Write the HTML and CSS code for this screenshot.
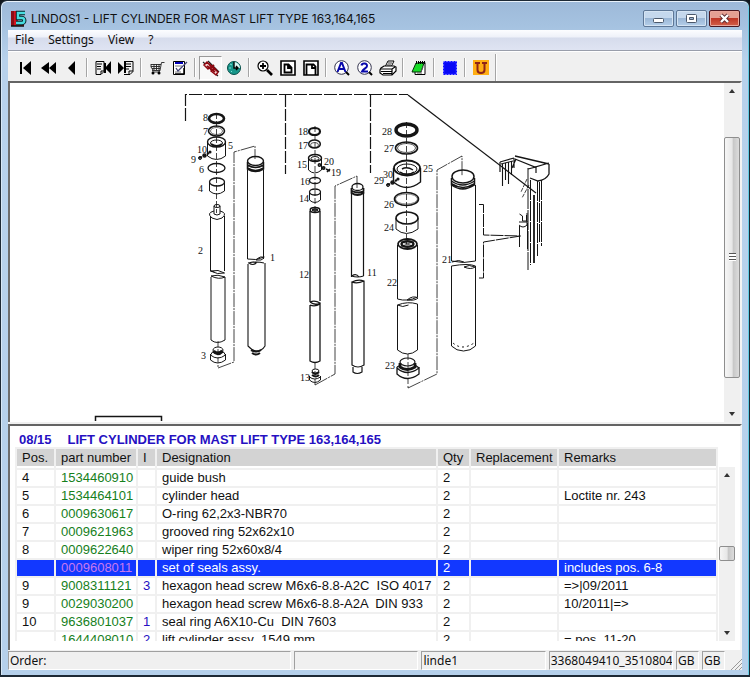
FILE: index.html
```html
<!DOCTYPE html>
<html lang="en">
<head>
<meta charset="utf-8">
<title>LINDOS1 - LIFT CYLINDER FOR MAST LIFT TYPE 163,164,165</title>
<link rel="stylesheet" href="styles.css">
</head>
<body>
<div class="window">
  <header class="titlebar">
    <svg class="app-icon" width="17" height="17" viewBox="0 0 17 17" aria-hidden="true">
      <path d="M1 1h7v12h6v3H1z" fill="#d3121f"/><path d="M1 1h3v15H1z" fill="#8a0d16"/><path d="M1 16h13" stroke="#111" stroke-width="1.5"/>
      <path d="M15 3H8v5h4c3 0 3 5 0 5H6" fill="none" stroke="#08252a" stroke-width="4.4"/>
      <path d="M15 3H8v5h4c3 0 3 5 0 5H6" fill="none" stroke="#48dce0" stroke-width="2.4"/>
    </svg>
    <h1>LINDOS1 - LIFT CYLINDER FOR MAST LIFT TYPE 163,164,165</h1>
    <div class="controls">
      <button class="control" aria-label="Minimize"><svg width="13" height="11" viewBox="0 0 13 11"><rect x="1.500" y="5.500" width="10" height="4" rx="1" fill="#fff" stroke="#4b586b"/></svg></button>
      <button class="control" aria-label="Restore"><svg width="13" height="11" viewBox="0 0 13 11"><rect x="1.500" y="1.500" width="10" height="8" rx="1" fill="#fff" stroke="#4b586b"/><path d="M4.500 4.500h4v2h-4z" fill="#9db4d0" stroke="#4b586b"/></svg></button>
      <button class="control close" aria-label="Close"><svg width="13" height="11" viewBox="0 0 13 11"><path d="M3 2l7 7M10 2L3 9" stroke="#5d2b30" stroke-width="4.200"/><path d="M3 2l7 7M10 2L3 9" stroke="#fff" stroke-width="2.400"/></svg></button>
    </div>
  </header>
  <nav class="menu">
    <button>File</button><button>Settings</button><button>View</button><button>?</button>
  </nav>
  <div class="toolbar" role="toolbar" aria-label="Catalogue tools">
    <button aria-label="First page"><svg width="18" height="18" viewBox="0 0 18 18"><path d="M3 3h2v12H3zM14 2v14L6 9z"/></svg></button>
    <button aria-label="Fast back"><svg width="18" height="18" viewBox="0 0 18 18"><path d="M9 3v12L1 9zM16 3v12L9 9z"/></svg></button>
    <button aria-label="Back"><svg width="18" height="18" viewBox="0 0 18 18"><path d="M12 2v14L5 9z"/></svg></button>
    <i class="sep"></i>
    <button aria-label="Previous list"><svg width="18" height="18" viewBox="0 0 18 18"><path d="M2 2.500h8v10l-3 3H2zM7 15v-3h3M3 5h5M3 7.500h4M3 10h4" fill="none" stroke="#000"/><path d="M10 4h2v10h-2zM17 2v13l-6-6z"/></svg></button>
    <button aria-label="Next list"><svg width="18" height="18" viewBox="0 0 18 18"><path d="M7 2.500h9v10l-3 3H7M12 15v-3h4M9 5h5M9 7.500h5M8 10h4" fill="none" stroke="#000"/><path d="M1 3v12l6-6zM7 3h2v11H7z"/></svg></button>
    <i class="sep"></i>
    <button aria-label="Order basket"><svg width="18" height="18" viewBox="0 0 18 18"><path d="M16.500 3.500h-3l-1.500 8H4M3 5.500h10M3 7.500h9M4 9.500h8M3 5v3l2 3M6 5v6M8.500 5v6M11 5v6M12 11l-1 2H4" fill="none" stroke="#222" stroke-width=".9"/><circle cx="5" cy="14" r="1.500"/><circle cx="11" cy="14" r="1.500"/></svg></button>
    <button aria-label="Order form"><svg width="18" height="18" viewBox="0 0 18 18"><path d="M2.500 2.500h11v13h-11z" fill="#fff" stroke="#000"/><path d="M4 4h8" stroke="#00b" stroke-width="2"/><path d="M4 7h7M4 13h6" stroke="#777"/><path d="M5 9l2 3 9-9" fill="none" stroke="#447" stroke-width="1.300"/><path d="M13 9v6M4 15h9" stroke="#000" stroke-width="1.500"/></svg></button>
    <i class="sep"></i>
    <button class="pressed" aria-label="Link picture" aria-pressed="true"><svg width="18" height="18" viewBox="0 0 18 18"><path d="M1 3l15 14M6 2l11 11" stroke="#222" stroke-width="1.200"/><path d="M2 6l3-3 4 4-3 3zM9 12l3-3 4 4-2 3z" fill="#f3d0d0" stroke="#8e0710" stroke-width="1.500"/><path d="M5 7l8 6M7 5l7 6M8 10l4-4" stroke="#8e0710" stroke-width="1.800"/></svg></button>
    <button aria-label="History"><svg width="18" height="18" viewBox="0 0 18 18"><circle cx="9" cy="9" r="6.500" fill="#17968a" stroke="#064d48"/><path d="M9 3a6 6 0 0 1 6 6H9z" fill="#d9f6f2"/><path d="M9 3v6h4M11 7l2 2-2 2" fill="none" stroke="#000" stroke-width="1.400"/><path d="M5 5l2 1M4 9h2M6 13l1-1" stroke="#7ee0d6"/></svg></button>
    <i class="sep"></i>
    <button aria-label="Zoom in"><svg width="18" height="18" viewBox="0 0 18 18"><circle cx="7" cy="7" r="5" fill="#fff" stroke="#000" stroke-width="1.200"/><path d="M4 7h6M7 4v6" stroke="#000" stroke-width="1.800"/><path d="M11 11l5 5" stroke="#000" stroke-width="2.600"/></svg></button>
    <button aria-label="Whole page"><svg width="18" height="18" viewBox="0 0 18 18"><path d="M2 2h14v14H2z" fill="#fff" stroke="#000" stroke-width="1.600"/><path d="M5.500 5.500h4l3 3v5h-7zM9 5v4h4" fill="none" stroke="#000" stroke-width="1.800"/></svg></button>
    <button aria-label="Page width"><svg width="18" height="18" viewBox="0 0 18 18"><path d="M2 2h14v14H2z" fill="#fff" stroke="#000" stroke-width="1.600"/><path d="M4.500 16V5.500h7l2 2V16M10 5v4h4" fill="none" stroke="#000" stroke-width="1.800"/></svg></button>
    <i class="sep"></i>
    <button aria-label="Search text"><svg width="18" height="18" viewBox="0 0 18 18"><circle cx="8.500" cy="8.500" r="6.800" fill="#fff" stroke="#33334d"/><path d="M13 13l3 3" stroke="#000" stroke-width="2"/><path d="M4.500 13L8 4h1l3.500 9M6 10h5" fill="none" stroke="#0808ab" stroke-width="2"/></svg></button>
    <button aria-label="Search number"><svg width="18" height="18" viewBox="0 0 18 18"><circle cx="8.500" cy="8.500" r="6.800" fill="#fff" stroke="#33334d"/><path d="M13 13l3 3" stroke="#000" stroke-width="2"/><path d="M5.500 6.500C6 3.500 11.500 4 11 7c0 2-4 3-5 5.500h6" fill="none" stroke="#0808ab" stroke-width="2"/></svg></button>
    <button aria-label="Print"><svg width="18" height="18" viewBox="0 0 18 18"><path d="M6 8l3-6h6l-3 6z" fill="#fff" stroke="#000"/><path d="M8 6h4M9 4h4" stroke="#000" stroke-width=".8"/><path d="M2 9l3-2h10l2 1v4l-4 4H4l-3-2v-3z" fill="#fff" stroke="#000" stroke-width="1.200"/><path d="M2 10h11l3-2M2 12.500h11M4 14.500h9M13 10v6" fill="none" stroke="#000" stroke-width="1.200"/></svg></button>
    <i class="sep"></i>
    <button aria-label="Notes"><svg width="18" height="18" viewBox="0 0 18 18"><path d="M8 3.500h7v12H5v-3" fill="#fff" stroke="#000"/><path d="M6 4h8l-3 9H2z" fill="#18dc27" stroke="#062d0a"/><path d="M6 3.500h9" stroke="#000" stroke-width="3" stroke-dasharray="1 1"/><path d="M11 13l2-5M7 14h5" stroke="#555" fill="none"/></svg></button>
    <i class="sep"></i>
    <button aria-label="Full screen"><svg width="18" height="18" viewBox="0 0 18 18"><path d="M3 3h12v12H3z" fill="#0808f5" stroke="#1010ff" stroke-width="2"/><path d="M2.500 2.500h13v13h-13z" fill="none" stroke="#c6c6ff" stroke-dasharray="1 2"/></svg></button>
    <i class="sep"></i>
    <button aria-label="Update"><svg width="18" height="18" viewBox="0 0 18 18"><path d="M1 1h16v15H1z" fill="#ffae13"/><path d="M3 4h5M10 4h5M5.500 4v7q0 3 3.500 3t3.500-3V4" fill="none" stroke="#8e2418" stroke-width="2"/></svg></button>
    <i class="sep"></i>
  </div>

  <main>
    <section class="pane picture" aria-label="Exploded drawing">
      <svg class="drawing" width="716" height="338" viewBox="10 83 716 338" fill="none" stroke="#151515">
        <defs>
          <g id="screw"><path d="M0 0l3-1M4-2l3-1M8-4l2-1" stroke-width="2"/><circle cx="1" cy="0" r="1.500"/><circle cx="5.500" cy="-2.500" r="1.500" stroke-width="1.500"/><circle cx="11" cy="-6" r=".8" stroke-width="1.500"/></g>
        </defs>
        <g stroke-width="1.200">
          <path d="M185.500 121V94.500H408" stroke-dasharray="13 2"/>
          <path d="M285.500 95v79M370.500 95v78" stroke-dasharray="12 2"/>
          <path d="M408 95L536 193"/><path d="M95.500 421v-4.500h66v4.500" stroke-width="1.500"/>
        </g>
        <g stroke-width=".8">
          <path d="M218 368l16-6V152l21-6v13M315 385l20-11V186l22-10v12M408 388l29-14V170l25-14v20" stroke-dasharray="14 1 2 1"/>
          <path d="M216.500 113v100M315 126v88M406.500 122v122M218 341v26M315 363v22M408 354v34" stroke-dasharray="6 2"/>
        </g>
        <g>
          <ellipse cx="216.500" cy="118.500" rx="7.500" ry="4.500" stroke-width="2.600"/>
          <ellipse cx="216.500" cy="131" rx="8" ry="5" stroke-width="1.600"/><ellipse cx="216.500" cy="131" rx="6" ry="3.500" stroke-width=".6"/>
          <path d="M207.500 142v14q9 7 18 0v-14"/><ellipse cx="216.500" cy="142" rx="9" ry="5" stroke-width="1.400"/><ellipse cx="216.500" cy="143" rx="6" ry="3"/><path d="M211 144q6 4 11 0" stroke-width="2"/>
          <ellipse cx="216.500" cy="168" rx="8.500" ry="4.500" stroke-width="1.300"/>
          <path d="M209.500 182v9q7 6 15 0v-9"/><ellipse cx="217" cy="182" rx="7.500" ry="4" stroke-width="1.300"/>
          <ellipse cx="217" cy="206" rx="3" ry="1.500"/><path d="M214 206v8q3 2 6 0v-8M214 211q-8 2-2 7 5 3 10 0 6-5-2-7"/>
          <path d="M210.500 216v55M224.500 216v55M210.500 271q8-2 14 2-7 2-14-2l4 1M211 277v63q6 5 14 0v-63M211 276q7-2 14 1-6 3-14-1"/>
          <path d="M210.500 354v6q7 6 15 0v-6M210.500 355q7 6 15 0l-2-3h-11z"/><ellipse cx="218" cy="350" rx="5" ry="3"/><path d="M213.500 351q4 5 9 0" stroke-width="3.500"/>
          <use href="#screw" x="199" y="158"/>
          <ellipse cx="255.500" cy="161" rx="8" ry="4.500" stroke-width="1.400"/><path d="M247.500 162v7q8 5 16 0v-7M247.500 165q8 5 16 0M247.500 168q8 5 16 0" stroke-width="1.500"/>
          <path d="M247.500 170v89M263.500 170v89M247.500 259q8 2 17-2M256 260q5-5 8-2-2 3-8 2"/>
          <path d="M248 264v82q5 5 8 5 6 0 9-5v-83M248 263q8-2 16 0M249 263q5-2 7 0-3 3-7 0" stroke-width="1.100"/><path d="M251 350q6 3 10 0M252 353q4 3 8 0" stroke-width="2"/>
        </g>
        <g>
          <ellipse cx="314.500" cy="131.500" rx="5.500" ry="3.500" stroke-width="2.200"/><ellipse cx="314.500" cy="144" rx="5.800" ry="4" stroke-width="1.500"/><ellipse cx="314.500" cy="145" rx="4" ry="2.500" stroke-width=".7"/>
          <path d="M308.500 158v12q6 6 13 0v-12"/><ellipse cx="315" cy="158" rx="6.500" ry="3.500" stroke-width="1.500"/><ellipse cx="315" cy="158.500" rx="4" ry="2"/>
          <circle cx="319.500" cy="165" r="1.200" stroke-width="1.500"/><circle cx="323.500" cy="168" r="1.200" stroke-width="1.800"/><path d="M326 169l4 2M327 172l3-3" stroke-width="1.600"/>
          <ellipse cx="315" cy="180.500" rx="5.500" ry="3" stroke-width="1.300"/><path d="M309.500 192v8q5 5 11 0v-8"/><ellipse cx="315" cy="192" rx="5.500" ry="3" stroke-width="1.300"/>
          <ellipse cx="315" cy="210" rx="4.800" ry="2.500" stroke-width="1.500"/><ellipse cx="315" cy="210" rx="2.500" ry="1" stroke-width="1.300"/>
          <path d="M310 211v91M320 211v90M310 302q5-2 10 1-5 3-10-1M310 305v56q5 3 10 0v-57q-5 3-10 1" stroke-width="1.300"/>
          <ellipse cx="315.500" cy="371" rx="3.500" ry="2"/><path d="M312 372q3 4 7 0M312 375q4 3 7 0" stroke-width="2"/><path d="M309.500 376v4q5 5 11 0v-4M309.500 377q5 4 11 0"/>
          <ellipse cx="357.500" cy="187" rx="5.500" ry="3.500" stroke-width="1.300"/><path d="M351.500 188v5q6 4 12 0v-5M352 191q6 3 12 0" stroke-width="1.800"/>
          <path d="M351.500 193v84M363.500 193v83M351.500 276q6 2 12 0M352 276q4-3 7 1M352 282v83q6 4 12 0v-84q-6-2-12 1 5 2 12-1M353 367v5q4 3 9 0v-5" stroke-width="1.200"/>
        </g>
        <g>
          <ellipse cx="406.500" cy="130" rx="10.500" ry="6" stroke-width="3.400"/><ellipse cx="406.500" cy="148" rx="11" ry="6" stroke-width="1.600"/><ellipse cx="406.500" cy="148" rx="9" ry="4.500" stroke-width=".7"/>
          <path d="M393.500 168v14q13 11 27 0v-14" stroke-width="1.400"/><ellipse cx="407" cy="168" rx="13" ry="7.500" stroke-width="1.800"/><ellipse cx="407" cy="169" rx="10" ry="5"/><path d="M400 172q7 5 14 0M402 169q5-3 11 1" stroke-width="1.500"/>
          <use href="#screw" x="387" y="185"/>
          <ellipse cx="406.500" cy="199" rx="12" ry="6.500" stroke-width="1.600"/><ellipse cx="406.500" cy="199" rx="11" ry="5" stroke-width=".5"/>
          <path d="M396 218v11q10 9 22 0v-11"/><ellipse cx="407" cy="218" rx="11" ry="6" stroke-width="1.500"/>
          <ellipse cx="407.500" cy="244" rx="9.500" ry="5" stroke-width="1.800"/><ellipse cx="407.500" cy="244" rx="6" ry="2.800" stroke-width="2.400"/><path d="M400 241l15 6M415 241l-15 6" stroke-width=".7"/>
          <path d="M397.500 245v54q10 3 20-2v-52M407 300q6-5 11-2-3 3-11 2M397.500 305v45q10 8 20 0v-46q-10-3-20 1 5 3 11 0"/>
          <ellipse cx="407.500" cy="362" rx="7.500" ry="4" stroke-width="1.200"/><path d="M400 363v4q7 5 15 0v-4" stroke-width="2.800"/><path d="M397 367v7q10 9 22 0v-7M397 368q10 9 22 0l-4-3M397 367l4-2" stroke-width="1.300"/>
          <ellipse cx="463" cy="176.500" rx="11" ry="6.500" stroke-width="1.500"/><path d="M451.500 178v7q11 8 23 0v-7M451.500 181q11 8 23 0M452 184q11 7 22 0" stroke-width="1.500"/>
          <path d="M451.500 185v76q12 3 24 0v-76M452 262q7-3 12 0M451.500 266v80q5 5 12 5t12-5v-80q-7-3-24 0M464 267q5-3 11 0-4 3-11 0"/><path d="M453 343q9 8 21 0" stroke-dasharray="2 3"/>
          <path d="M479 204.500h4.500V235l37 1-37 6v36H479" stroke-dasharray="13 1"/>
        </g>
        <g>
          <path d="M515 156l34 8M515 159l20 8 14-4M549 164v10q-3 6-11 7l-8-3" stroke-width="1.300"/>
          <path d="M500 162l14-4M501 164l12-3M500 162v10M514 158v10M516 159l-4 9M528 169l8-2v6" stroke-width="1.200"/>
          <path d="M502.500 164v22M505.500 163v17M508.500 162v22M511.500 161v14" stroke-width="1.100"/>
          <path d="M528 168v102M530.500 180v85M537.500 181v75M541.500 180v66M539.500 182v60" stroke-dasharray="20 1"/>
          <path d="M534 195v68" stroke-width="1.800"/>
          <path d="M527 179l-6 13M529 185l-7 13" stroke-width=".8" stroke-dasharray="4 1"/>
          <path d="M519.500 226v21M527.500 223v26M519.500 214l3 2v5h4v-6M519 222h8M519 225q4 4 8 0v-4M527 213v9"/>
        </g>
        <g class="callouts" fill="#111" stroke="none">
          <text x="203" y="121">8</text><text x="203" y="135">7</text><text x="197" y="153">10</text><text x="191" y="163">9</text><text x="228" y="149">5</text><text x="199" y="173">6</text><text x="198" y="192">4</text><text x="198" y="254">2</text><text x="201" y="359">3</text><text x="270" y="261">1</text>
          <text x="298" y="135">18</text><text x="298" y="149">17</text><text x="297" y="168">15</text><text x="324" y="165">20</text><text x="331" y="176">19</text><text x="300" y="185">16</text><text x="299" y="202">14</text><text x="299" y="278">12</text><text x="300" y="381">13</text><text x="367" y="276">11</text>
          <text x="382" y="135">28</text><text x="384" y="152">27</text><text x="383" y="178">30</text><text x="374" y="184">29</text><text x="423" y="172">25</text><text x="384" y="208">26</text><text x="384" y="231">24</text><text x="387" y="286">22</text><text x="385" y="369">23</text><text x="442" y="263">21</text>
        </g>
      </svg>
      <div class="scrollbar" aria-hidden="true"><i class="up"></i><i class="track before"></i><i class="thumb"></i><i class="track after"></i><i class="down"></i></div>
    </section>

    <section class="pane parts">
      <h2><span>08/15</span>LIFT CYLINDER FOR MAST LIFT TYPE 163,164,165</h2>
      <div class="list">
        <div class="rows">
          <table>
            <colgroup><col class="pos"><col class="number"><col class="info"><col class="name"><col class="qty"><col class="repl"><col></colgroup>
            <thead><tr><th>Pos.</th><th>part number</th><th>I</th><th>Designation</th><th>Qty</th><th>Replacement</th><th>Remarks</th></tr></thead>
            <tbody>
              <tr><td>4</td><td>1534460910</td><td></td><td>guide bush</td><td>2</td><td></td><td></td></tr>
              <tr><td>5</td><td>1534464101</td><td></td><td>cylinder head</td><td>2</td><td></td><td>Loctite nr. 243</td></tr>
              <tr><td>6</td><td>0009630617</td><td></td><td>O-ring 62,2x3-NBR70</td><td>2</td><td></td><td></td></tr>
              <tr><td>7</td><td>0009621963</td><td></td><td>grooved ring 52x62x10</td><td>2</td><td></td><td></td></tr>
              <tr><td>8</td><td>0009622640</td><td></td><td>wiper ring 52x60x8/4</td><td>2</td><td></td><td></td></tr>
              <tr class="selected"><td></td><td>0009608011</td><td></td><td>set of seals assy.</td><td>2</td><td></td><td>includes pos. 6-8</td></tr>
              <tr><td>9</td><td>9008311121</td><td>3</td><td>hexagon head screw M6x6-8.8-A2C  ISO 4017</td><td>2</td><td></td><td>=&gt;|09/2011</td></tr>
              <tr><td>9</td><td>0029030200</td><td></td><td>hexagon head screw M6x6-8.8-A2A  DIN 933</td><td>2</td><td></td><td>10/2011|=&gt;</td></tr>
              <tr><td>10</td><td>9636801037</td><td>1</td><td>seal ring A6X10-Cu  DIN 7603</td><td>2</td><td></td><td></td></tr>
              <tr><td></td><td>1644408010</td><td>2</td><td>lift cylinder assy  1549 mm</td><td>2</td><td></td><td>= pos. 11-20</td></tr>
            </tbody>
          </table>
        </div>
        <div class="scrollbar list-scroll" aria-hidden="true"><i class="up"></i><i class="track before"></i><i class="thumb"></i><i class="track after"></i><i class="down"></i></div>
      </div>
    </section>
  </main>

  <footer class="status">
    <span>Order:</span><span></span><span>linde1</span><span>3368049410_3510804</span><span>GB</span><span>GB</span>
    <svg class="grip" width="12" height="12" viewBox="0 0 12 12" aria-hidden="true"><path d="M1 12L12 1M5 12l7-7M9 12l3-3" stroke="#999"/></svg>
  </footer>
</div>
</body>
</html>
```
FILE: styles.css
```css
* { box-sizing: border-box; }

body {
  margin: 0;
  background: #10161d;
  font: 12px/16px "Noto Sans", sans-serif;
  color: #111;
}

button {
  margin: 0;
  padding: 0;
  border: 0;
  background: none;
  font: inherit;
  color: inherit;
}

.window {
  display: flex;
  flex-direction: column;
  height: 100vh;
  min-height: 560px;
  padding: 0 7px 5px;
  border: 1px solid #1d2935;
  border-bottom-width: 2px;
  border-radius: 7px 7px 0 0;
  background: linear-gradient(#9db9d9, #a5c2e0 24px, #b8d2ec 60px, #b5d0eb);
  box-shadow: inset 0 1px #e9f2fb, inset 1px 0 #d8e8f6, inset -1px 0 #63cce4;
}

.titlebar {
  display: flex;
  align-items: center;
  height: 29px;
  padding: 6px 2px 0;
  flex: none;
}

.app-icon { margin-right: 4px; }

h1 {
  flex: 1;
  margin: 0;
  font: 12px/16px Inter, "Noto Sans", sans-serif;
  white-space: nowrap;
  overflow: hidden;
}

.controls { display: flex; gap: 2px; }

.control {
  display: grid;
  place-items: center;
  width: 31px;
  height: 17px;
  border: 1px solid #5e7796;
  border-radius: 2px;
  background: linear-gradient(#c5d8ed 45%, #9bb7d6 50%, #b5cfea);
  box-shadow: inset 0 0 0 1px #d5e4f3;
}

.close {
  border-color: #4a1720;
  background: linear-gradient(#e4a093 45%, #bf3726 50%, #d2604a);
  box-shadow: inset 0 0 0 1px #e9a79c;
}

.menu {
  display: flex;
  gap: 14px;
  flex: none;
  height: 20px;
  padding: 0 7px;
  background: linear-gradient(#fcfdff, #eef1f9 7px, #d6dcec 8px, #dfe4f2);
}

.toolbar {
  display: flex;
  align-items: center;
  flex: none;
  height: 31px;
  padding: 3px 6px 0;
  border-top: 1px solid #999eab;
  background: #f0f0f0;
  box-shadow: inset 0 1px #fff;
}

.toolbar button {
  display: grid;
  place-items: center;
  flex: none;
  width: 23px;
  height: 24px;
}

.toolbar .pressed {
  border: 1px solid;
  border-color: #999 #fff #fff #999;
  background: #f8f8f8;
}

.sep {
  flex: none;
  width: 2px;
  height: 19px;
  margin: 0 3px;
  border-left: 1px solid #a5a5a5;
  border-right: 1px solid #fff;
}

.sep:last-child { height: 27px; }

main {
  display: grid;
  grid-template-rows: minmax(0, 343fr) minmax(0, 226fr);
  flex: 1;
  min-height: 0;
  background: #f0f0f0;
}

.pane {
  background: #fff;
  border-top: 2px solid #646464;
  border-left: 2px solid #6e6e6e;
  border-right: 2px solid #f4f4f4;
}

.picture {
  display: flex;
  min-width: 0;
  margin-bottom: 2px;
  overflow: hidden;
}

.drawing { display: block; flex: none; }

.callouts { font: 10px "Liberation Serif", serif; }

.scrollbar {
  display: flex;
  flex-direction: column;
  flex: none;
  width: 16px;
  margin-left: auto;
  background: #f0f0f0;
}

.picture .scrollbar { margin-left: -2px; }

.up, .down {
  display: grid;
  place-items: center;
  flex: none;
  height: 16px;
}

.up::before, .down::before {
  content: "";
  border: 3px solid transparent;
  border-top-width: 0;
  border-bottom: 4px solid #333;
}

.down::before { transform: rotate(180deg); }

.thumb {
  display: grid;
  place-items: center;
  flex: 240 1 0;
  border: 1px solid #8e8e8e;
  border-radius: 2px;
  background: linear-gradient(90deg, #f6f6f6, #e7e7e7 50%, #c8c8c8 60%, #dcdcdc);
}

.picture .thumb::before {
  content: "";
  width: 7px;
  height: 8px;
  background: repeating-linear-gradient(#555 0 1px, #fff 1px 3px);
}

.before { flex: 38 1 0; }
.after { flex: 28 1 0; }

.parts {
  display: flex;
  flex-direction: column;
  min-width: 0;
  padding: 6px 5px 9px;
  font: 13px/16px "Liberation Sans", sans-serif;
}

h2 {
  display: flex;
  gap: 16px;
  flex: none;
  margin: 0 0 0 4px;
  font-size: 13px;
  line-height: 15px;
  color: #2610c2;
}

.list { display: flex; flex: 1; min-height: 0; }

.rows { flex: 1; min-width: 0; overflow: hidden; }

table {
  width: 100%;
  table-layout: fixed;
  border-spacing: 2px;
  background: #f0f0f0;
}

.pos { width: 37px; }
.number { width: 80px; }
.info { width: 17px; }
.name { width: 279px; }
.qty { width: 31px; }
.repl { width: 86px; }

th, td {
  height: 16px;
  padding: 0 0 0 5px;
  background: #fff;
  font-weight: 400;
  text-align: left;
  white-space: pre;
}

th {
  height: 19px;
  border-bottom: 2px solid #fff;
  background: #d3d3d3;
}

td:nth-child(2) { color: #16801c; }
td:nth-child(3) { color: #2610c2; }

.selected td { background: #1238ff; color: #fff; }
.selected td:nth-child(2) { color: #c878ee; }

.list-scroll { margin: 20px 0 0 1px; }
.list-scroll .before { flex: 63 1 0; }
.list-scroll .thumb { flex: 0 0 15px; }
.list-scroll .after { flex: 64 1 0; }

.status {
  display: flex;
  gap: 3px;
  flex: none;
  height: 20px;
  padding: 1px 17px 0 0;
  background: #f0f0f0;
  position: relative;
}

.status span {
  flex: 123 1 0;
  min-width: 0;
  padding: 1px 0 0 1px;
  overflow: hidden;
  border: 1px solid;
  border-color: #a0a0a0 #fff #fff #a0a0a0;
  white-space: nowrap;
}

.status span:first-child { flex-grow: 284; }
.status span:nth-child(5), .status span:nth-child(6) { flex: 0 0 23px; }

.grip { position: absolute; right: 0; bottom: 0; }
```
